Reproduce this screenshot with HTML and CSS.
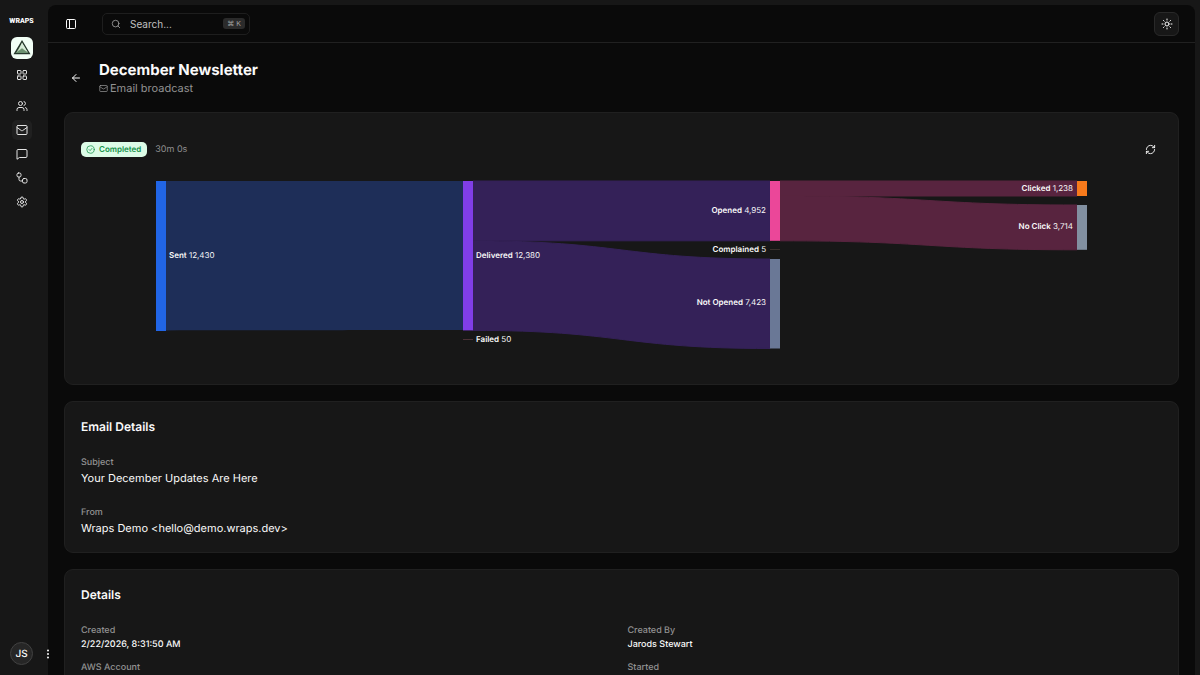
FILE: index.html
```html
<!DOCTYPE html>
<html lang="en">
<head>
<meta charset="utf-8">
<meta name="viewport" content="width=device-width, initial-scale=1">
<title>December Newsletter</title>
<link rel="stylesheet" href="styles.css">
</head>
<body>
<div class="app">
  <aside class="sidebar">
    <div class="brand">WRAPS</div>
    <button class="org" aria-label="Organization">
      <svg viewBox="0 0 22 22" width="22" height="22"><path d="M11 4.500 18.200 16.500H3.800z" fill="#b9d3b5" stroke="#26382c" stroke-width="1.500"/><path d="M11 5.500 7.800 13.200 11 10.800l6 4.800z" fill="#d7ecd9"/><path d="M4.400 16 11 11.500 17.600 16z" fill="#6b9270"/></svg>
    </button>
    <nav class="nav" aria-label="Main">
      <a class="nav-link nav-link-home" href="#" aria-label="Dashboard"><svg class="icon" viewBox="0 0 24 24"><rect x="3" y="3" width="7" height="7" rx="1"/><rect x="14" y="3" width="7" height="7" rx="1"/><rect x="14" y="14" width="7" height="7" rx="1"/><rect x="3" y="14" width="7" height="7" rx="1"/></svg></a>
      <a class="nav-link" href="#" aria-label="Contacts"><svg class="icon" viewBox="0 0 24 24"><path d="M16 21v-2a4 4 0 0 0-4-4H6a4 4 0 0 0-4 4v2"/><circle cx="9" cy="7" r="4"/><path d="M22 21v-2a4 4 0 0 0-3-3.870M16 3.130a4 4 0 0 1 0 7.750"/></svg></a>
      <a class="nav-link active" href="#" aria-label="Broadcasts"><svg class="icon" viewBox="0 0 24 24"><rect x="2" y="3" width="20" height="18" rx="2"/><path d="m2 7 8.900 6.200a2 2 0 0 0 2.200 0L22 7"/></svg></a>
      <a class="nav-link" href="#" aria-label="Messages"><svg class="icon" viewBox="0 0 24 24"><path d="M22 17a2 2 0 0 1-2 2H6.800L2 22.500V5a2 2 0 0 1 2-2h16a2 2 0 0 1 2 2z"/></svg></a>
      <a class="nav-link" href="#" aria-label="Workflows"><svg class="icon" viewBox="0 0 24 24"><rect x="2" y="2" width="8" height="8" rx="3"/><path d="M6 10v5a3 3 0 0 0 3 3h4"/><rect x="13" y="13" width="9" height="9" rx="3"/></svg></a>
      <a class="nav-link" href="#" aria-label="Settings"><svg class="icon" viewBox="0 0 24 24"><path d="M9.700 4.100a2.300 2.300 0 0 1 4.600 0 2.300 2.300 0 0 0 3.300 1.900 2.300 2.300 0 0 1 2.300 4 2.300 2.300 0 0 0 0 3.800 2.300 2.300 0 0 1-2.300 4 2.300 2.300 0 0 0-3.300 1.900 2.300 2.300 0 0 1-4.600 0 2.300 2.300 0 0 0-3.300-1.900 2.300 2.300 0 0 1-2.300-4 2.300 2.300 0 0 0 0-3.800 2.300 2.300 0 0 1 2.300-4 2.300 2.300 0 0 0 3.300-1.900"/><circle cx="12" cy="12" r="3"/></svg></a>
    </nav>
    <div class="user">
      <span class="avatar">JS</span>
      <button class="more" aria-label="Account menu"><svg viewBox="0 0 4 10" width="4" height="10" fill="currentColor"><circle cx="2" cy="1.500" r="1"/><circle cx="2" cy="5" r="1"/><circle cx="2" cy="8.500" r="1"/></svg></button>
    </div>
  </aside>

  <div class="panel">
    <header class="topbar">
      <button class="icon-button" aria-label="Toggle sidebar"><svg class="icon" viewBox="0 0 24 24"><rect x="3" y="3" width="18" height="18" rx="2"/><path d="M9 3v18"/></svg></button>
      <div class="search">
        <svg class="icon" viewBox="0 0 24 24"><circle cx="11" cy="11" r="8"/><path d="m21 21-4.300-4.300"/></svg>
        <input class="search-input" type="text" placeholder="Search..." aria-label="Search">
        <kbd class="kbd">⌘ K</kbd>
      </div>
      <button class="theme" aria-label="Toggle theme"><svg class="icon" viewBox="0 0 24 24"><circle cx="12" cy="12" r="4"/><path d="M12 2v2M12 20v2M4.900 4.900l1.400 1.400M17.700 17.700l1.400 1.400M2 12h2M20 12h2M6.300 17.700l-1.400 1.400M19.100 4.900l-1.400 1.400"/></svg></button>
    </header>

    <main class="content">
      <div class="page-head">
        <a class="icon-button" href="#" aria-label="Back"><svg class="icon" viewBox="0 0 24 24"><path d="m12 19-7-7 7-7M19 12H5"/></svg></a>
        <div>
          <h1 class="page-title">December Newsletter</h1>
          <p class="page-sub"><svg class="icon icon-small" viewBox="0 0 24 24"><rect x="2" y="4" width="20" height="16" rx="2"/><path d="m2 7 9 6a2 2 0 0 0 2 0l9-6"/></svg>Email broadcast</p>
        </div>
      </div>

      <section class="card chart-card" aria-label="Delivery funnel">
        <div class="status-row">
          <span class="badge"><svg class="icon icon-small" viewBox="0 0 24 24"><circle cx="12" cy="12" r="10"/><path d="m8 12 3 3 5-6"/></svg>Completed</span>
          <span class="duration">30m 0s</span>
          <button class="refresh" aria-label="Refresh"><svg class="icon" viewBox="0 0 24 24"><path d="M3 12a9 9 0 0 1 9-9 9.800 9.800 0 0 1 6.700 2.700L21 8"/><path d="M21 3v5h-5M21 12a9 9 0 0 1-9 9 9.800 9.800 0 0 1-6.700-2.700L3 16"/><path d="M8 16H3v5"/></svg></button>
        </div>
        <svg class="sankey" viewBox="0 0 1081 207" role="img" aria-label="Sent to clicked flow">
          <g class="link-sent">
            <path d="M85 20H382V169C233 169 233 169.400 85 169.400z"/>
          </g>
          <g class="link-delivered">
            <path d="M392 20H689V79.800H392z"/>
            <path d="M392 79.900C541 79.900 541 98 689 98V187.500C541 187.500 541 169.400 392 169.400z"/>
          </g>
          <g class="link-opened">
            <path d="M699 20H996V35H699z"/>
            <path d="M699 35C848 35 848 44 996 44V88.800C848 88.800 848 79.800 699 79.800z"/>
          </g>
          <rect x="75" y="20" width="10" height="150" fill="#2165e6"/>
          <rect x="382" y="20" width="10" height="149.400" fill="#803ee7"/>
          <rect x="382" y="178" width="10" height="1" fill="#4b3136"/>
          <rect x="689" y="20" width="10" height="59.800" fill="#eb4799"/>
          <rect x="689" y="88" width="10" height="1" fill="#3a302c"/>
          <rect x="689" y="98" width="10" height="89.500" fill="#6a7896"/>
          <rect x="996" y="20" width="10" height="15" fill="#f87a1b"/>
          <rect x="996" y="44" width="10" height="44.800" fill="#8290a1"/>
          <g class="node-label">
            <text x="88" y="97"><tspan class="name">Sent</tspan> 12,430</text>
            <text x="395" y="97"><tspan class="name">Delivered</tspan> 12,380</text>
            <text x="395" y="181"><tspan class="name">Failed</tspan> 50</text>
          </g>
          <g class="node-label node-label-end">
            <text x="685" y="52"><tspan class="name">Opened</tspan> 4,952</text>
            <text x="685" y="91"><tspan class="name">Complained</tspan> 5</text>
            <text x="685" y="144"><tspan class="name">Not Opened</tspan> 7,423</text>
            <text x="992" y="30"><tspan class="name">Clicked</tspan> 1,238</text>
            <text x="992" y="68"><tspan class="name">No Click</tspan> 3,714</text>
          </g>
        </svg>
      </section>

      <section class="card">
        <h2 class="card-title">Email Details</h2>
        <dl class="fields">
          <div><dt>Subject</dt><dd>Your December Updates Are Here</dd></div>
          <div><dt>From</dt><dd>Wraps Demo &lt;hello@demo.wraps.dev&gt;</dd></div>
        </dl>
      </section>

      <section class="card">
        <h2 class="card-title">Details</h2>
        <dl class="fields fields-grid">
          <div><dt>Created</dt><dd>2/22/2026, 8:31:50 AM</dd></div>
          <div><dt>Created By</dt><dd>Jarods Stewart</dd></div>
          <div><dt>AWS Account</dt></div>
          <div><dt>Started</dt></div>
        </dl>
      </section>
    </main>
  </div>
</div>
</body>
</html>
```

FILE: styles.css
```css
* {
  box-sizing: border-box;
}

body {
  margin: 0;
  background: #171717;
  color: #fafafa;
  font-family: Inter, "Liberation Sans", sans-serif;
  font-size: 10px;
  text-rendering: geometricPrecision;
}

h1, h2, p, dl, dd {
  margin: 0;
}

button, input {
  border: 0;
  padding: 0;
  background: none;
  color: inherit;
  font: inherit;
}

a {
  color: inherit;
}

.icon {
  display: block;
  flex: none;
  width: 12px;
  height: 12px;
  fill: none;
  stroke: currentColor;
  stroke-width: 2;
  stroke-linecap: round;
  stroke-linejoin: round;
}

.icon-small {
  width: 9px;
  height: 9px;
}

.app {
  display: flex;
  height: 100vh;
  padding: 5px 5px 0 0;
}

.sidebar {
  display: flex;
  flex: none;
  flex-direction: column;
  align-items: center;
  width: 48px;
  padding: 11px 5px 10px 0;
}

.brand {
  font-family: Roboto, "Liberation Sans", sans-serif;
  font-size: 7px;
  font-weight: 900;
  line-height: 10px;
}

.org {
  display: block;
  width: 22px;
  height: 22px;
  margin-top: 11px;
  border-radius: 6px;
  background: #f2fff6;
}

.nav {
  display: flex;
  flex-direction: column;
  gap: 4px;
  margin-top: 6px;
}

.nav-link {
  display: grid;
  place-items: center;
  width: 20px;
  height: 20px;
  border-radius: 5px;
  color: #e4e4e4;
}

.nav-link-home {
  margin-bottom: 7px;
}

.nav-link.active {
  background: #202020;
}

.user {
  display: flex;
  align-items: center;
  gap: 13px;
  width: 100%;
  margin-top: auto;
  padding-left: 10px;
}

.avatar {
  display: grid;
  flex: none;
  place-items: center;
  width: 23px;
  height: 23px;
  border: 1px solid #414141;
  border-radius: 50%;
  background: #262626;
  font-weight: 500;
}

.more {
  z-index: 1;
  display: block;
  flex: none;
}

.more svg {
  display: block;
}

.panel {
  display: flex;
  flex: 1;
  flex-direction: column;
  min-width: 0;
  border-radius: 8px 8px 0 0;
  background: #0a0a0a;
}

.topbar {
  display: flex;
  flex: none;
  align-items: center;
  height: 38px;
  padding: 0 16px 0 11px;
  border-bottom: 1px solid #212121;
}

.icon-button {
  display: grid;
  flex: none;
  place-items: center;
  width: 24px;
  height: 24px;
}

.search {
  display: flex;
  align-items: center;
  width: 148px;
  height: 22px;
  margin-left: 19px;
  padding: 0 4px 0 8px;
  border: 1px solid #1e1e1e;
  border-radius: 5px;
  color: #a0a0a0;
}

.search .icon {
  width: 10px;
  height: 10px;
}

.search-input {
  flex: 1;
  min-width: 0;
  margin-left: 9px;
  font-size: 10px;
}

.search-input::placeholder {
  color: #c0c0c0;
  opacity: 1;
}

.kbd {
  padding: 0 4px;
  border-radius: 3px;
  background: #2b2b2b;
  color: #a1a1a1;
  font-family: Inter, "DejaVu Sans", sans-serif;
  font-size: 7px;
  line-height: 11px;
}

.theme {
  display: grid;
  place-items: center;
  width: 25px;
  height: 24px;
  margin-left: auto;
  border: 1px solid #292929;
  border-radius: 6px;
  background: #171717;
}

.content {
  display: flex;
  flex: 1;
  flex-direction: column;
  gap: 16px;
  min-height: 0;
  padding: 17px 16px 16px;
  overflow-y: auto;
  scrollbar-width: none;
}

.page-head {
  display: flex;
  flex: none;
  align-items: center;
  gap: 11px;
}

.page-title {
  font-size: 15px;
  font-weight: 700;
  line-height: 20px;
}

.page-sub {
  display: flex;
  align-items: center;
  gap: 2px;
  color: #929292;
  font-size: 11px;
  line-height: 16px;
}

.card {
  flex: none;
  padding: 16px;
  border: 1px solid #202020;
  border-radius: 9px;
  background: #171717;
}

.chart-card {
  padding-top: 24px;
}

.status-row {
  display: flex;
  align-items: center;
  gap: 8px;
}

.badge {
  display: flex;
  align-items: center;
  gap: 4px;
  height: 15px;
  padding: 0 6px 0 5px;
  border-radius: 5px;
  background: #dcfce7;
  color: #15934a;
  font-size: 8px;
  font-weight: 600;
}

.duration {
  color: #8f8f8f;
  font-size: 9px;
}

.refresh {
  display: grid;
  place-items: center;
  width: 24px;
  height: 24px;
  margin-left: auto;
}

.refresh .icon {
  width: 11px;
  height: 11px;
}

.sankey {
  display: block;
  width: 100%;
}

.link-sent {
  fill: #1e2e58;
}

.link-delivered {
  fill: #342158;
  stroke: #342158;
}

.link-opened {
  fill: #58243f;
  stroke: #58243f;
}

.node-label {
  fill: #fafafa;
  font-size: 8px;
}

.node-label-end {
  text-anchor: end;
}

.name {
  font-weight: 600;
}

.card-title {
  font-size: 12px;
  font-weight: 600;
  line-height: 18px;
}

.fields {
  display: grid;
  gap: 20px;
  margin-top: 20px;
  font-size: 11px;
  line-height: 16px;
}

.fields dt {
  color: #929292;
  font-size: 9px;
  font-weight: 500;
  line-height: 14px;
}

.fields-grid {
  grid-template-columns: 1fr 1fr;
  gap: 9px 12px;
  font-size: 9px;
  font-weight: 500;
  line-height: 14px;
}
```
